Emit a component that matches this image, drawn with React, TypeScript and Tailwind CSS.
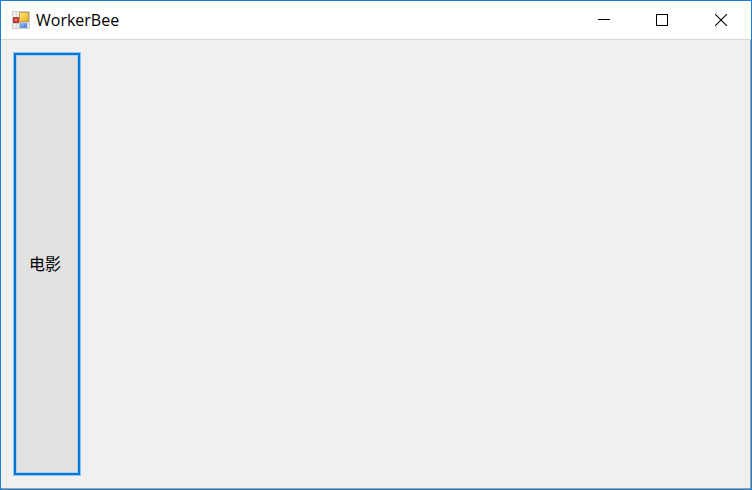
import React from 'react';

const AppIcon = () => (
  <svg className="h-[18px] w-[18px]" viewBox="0 0 18 18" aria-hidden="true">
    <defs>
      <linearGradient id="yellow" x1="0" y1="0" x2="1" y2="1">
        <stop offset="0" stopColor="#ffe890" />
        <stop offset="0.5" stopColor="#f6cc48" />
        <stop offset="1" stopColor="#e0a820" />
      </linearGradient>
      <linearGradient id="blue" x1="0" y1="0" x2="1" y2="1">
        <stop offset="0" stopColor="#a0c4ff" />
        <stop offset="1" stopColor="#4078e0" />
      </linearGradient>
    </defs>
    <rect width="18" height="18" rx="1" fill="#cccccc" />
    <path d="M1 1h6v5H1zM1 13h6v4H1zM16 12h1v5h-1z" fill="#f4f4f4" />
    <path d="M4.5 1v5M1 3.5h6M4.5 13v4M1 15.5h6" stroke="#dcdcdc" />
    <rect x="1" y="6" width="6" height="6" fill="#b04038" />
    <rect x="2" y="7" width="4" height="4" fill="#cc3c34" />
    <rect x="3" y="8" width="2" height="2" fill="#e88880" />
    <rect x="7" y="1" width="10" height="10" fill="#c8a050" />
    <rect x="8" y="2" width="8" height="8" fill="url(#yellow)" />
    <rect x="8" y="12" width="7" height="5" fill="#6c98e0" />
    <rect x="9" y="12" width="5" height="4" fill="url(#blue)" />
  </svg>
);

const TitleBar = () => (
  <header className="flex h-[39px] shrink-0 items-center border-b border-[#d6d6d6] bg-white pl-[11px]">
    <AppIcon />
    <h1 className="ml-1.5 flex-1 text-base leading-5">WorkerBee</h1>
    <div className="flex h-full">
      <button type="button" aria-label="Minimize" className="flex w-[58px] items-center justify-center">
        <svg className="h-3 w-3" viewBox="0 0 12 12" shapeRendering="crispEdges">
          <path d="M0 5h12v1H0z" />
        </svg>
      </button>
      <button type="button" aria-label="Maximize" className="flex w-[58px] items-center justify-center">
        <svg className="h-3 w-3" viewBox="0 0 12 12" fill="none" stroke="black" shapeRendering="crispEdges">
          <path d="M.5 .5h11v11H.5z" />
        </svg>
      </button>
      <button type="button" aria-label="Close" className="flex w-[60px] items-center justify-center">
        <svg className="h-3 w-3" viewBox="0 0 12 12" fill="none" stroke="black" strokeWidth="1.1">
          <path d="M0 0l12 12M12 0L0 12" />
        </svg>
      </button>
    </div>
  </header>
);

export default function App() {
  return (
    <div className="flex min-h-screen flex-col border border-[#1a7fd4] bg-[#f0f0f0] font-['Open_Sans','Noto_Sans_CJK_SC',sans-serif] text-black">
      <TitleBar />
      <main className="flex flex-1 border-r border-b border-[#a0a0a0] px-3 pt-3 pb-3">
        <button
          type="button"
          className="w-[68px] border border-[#8fc3ec] bg-[#e1e1e1] pr-1 text-base leading-5 inset-shadow-[0_0_0_2px_#0078d7] inset-ring-3 inset-ring-[#b4cfe4]"
        >
          电影
        </button>
      </main>
    </div>
  );
}
